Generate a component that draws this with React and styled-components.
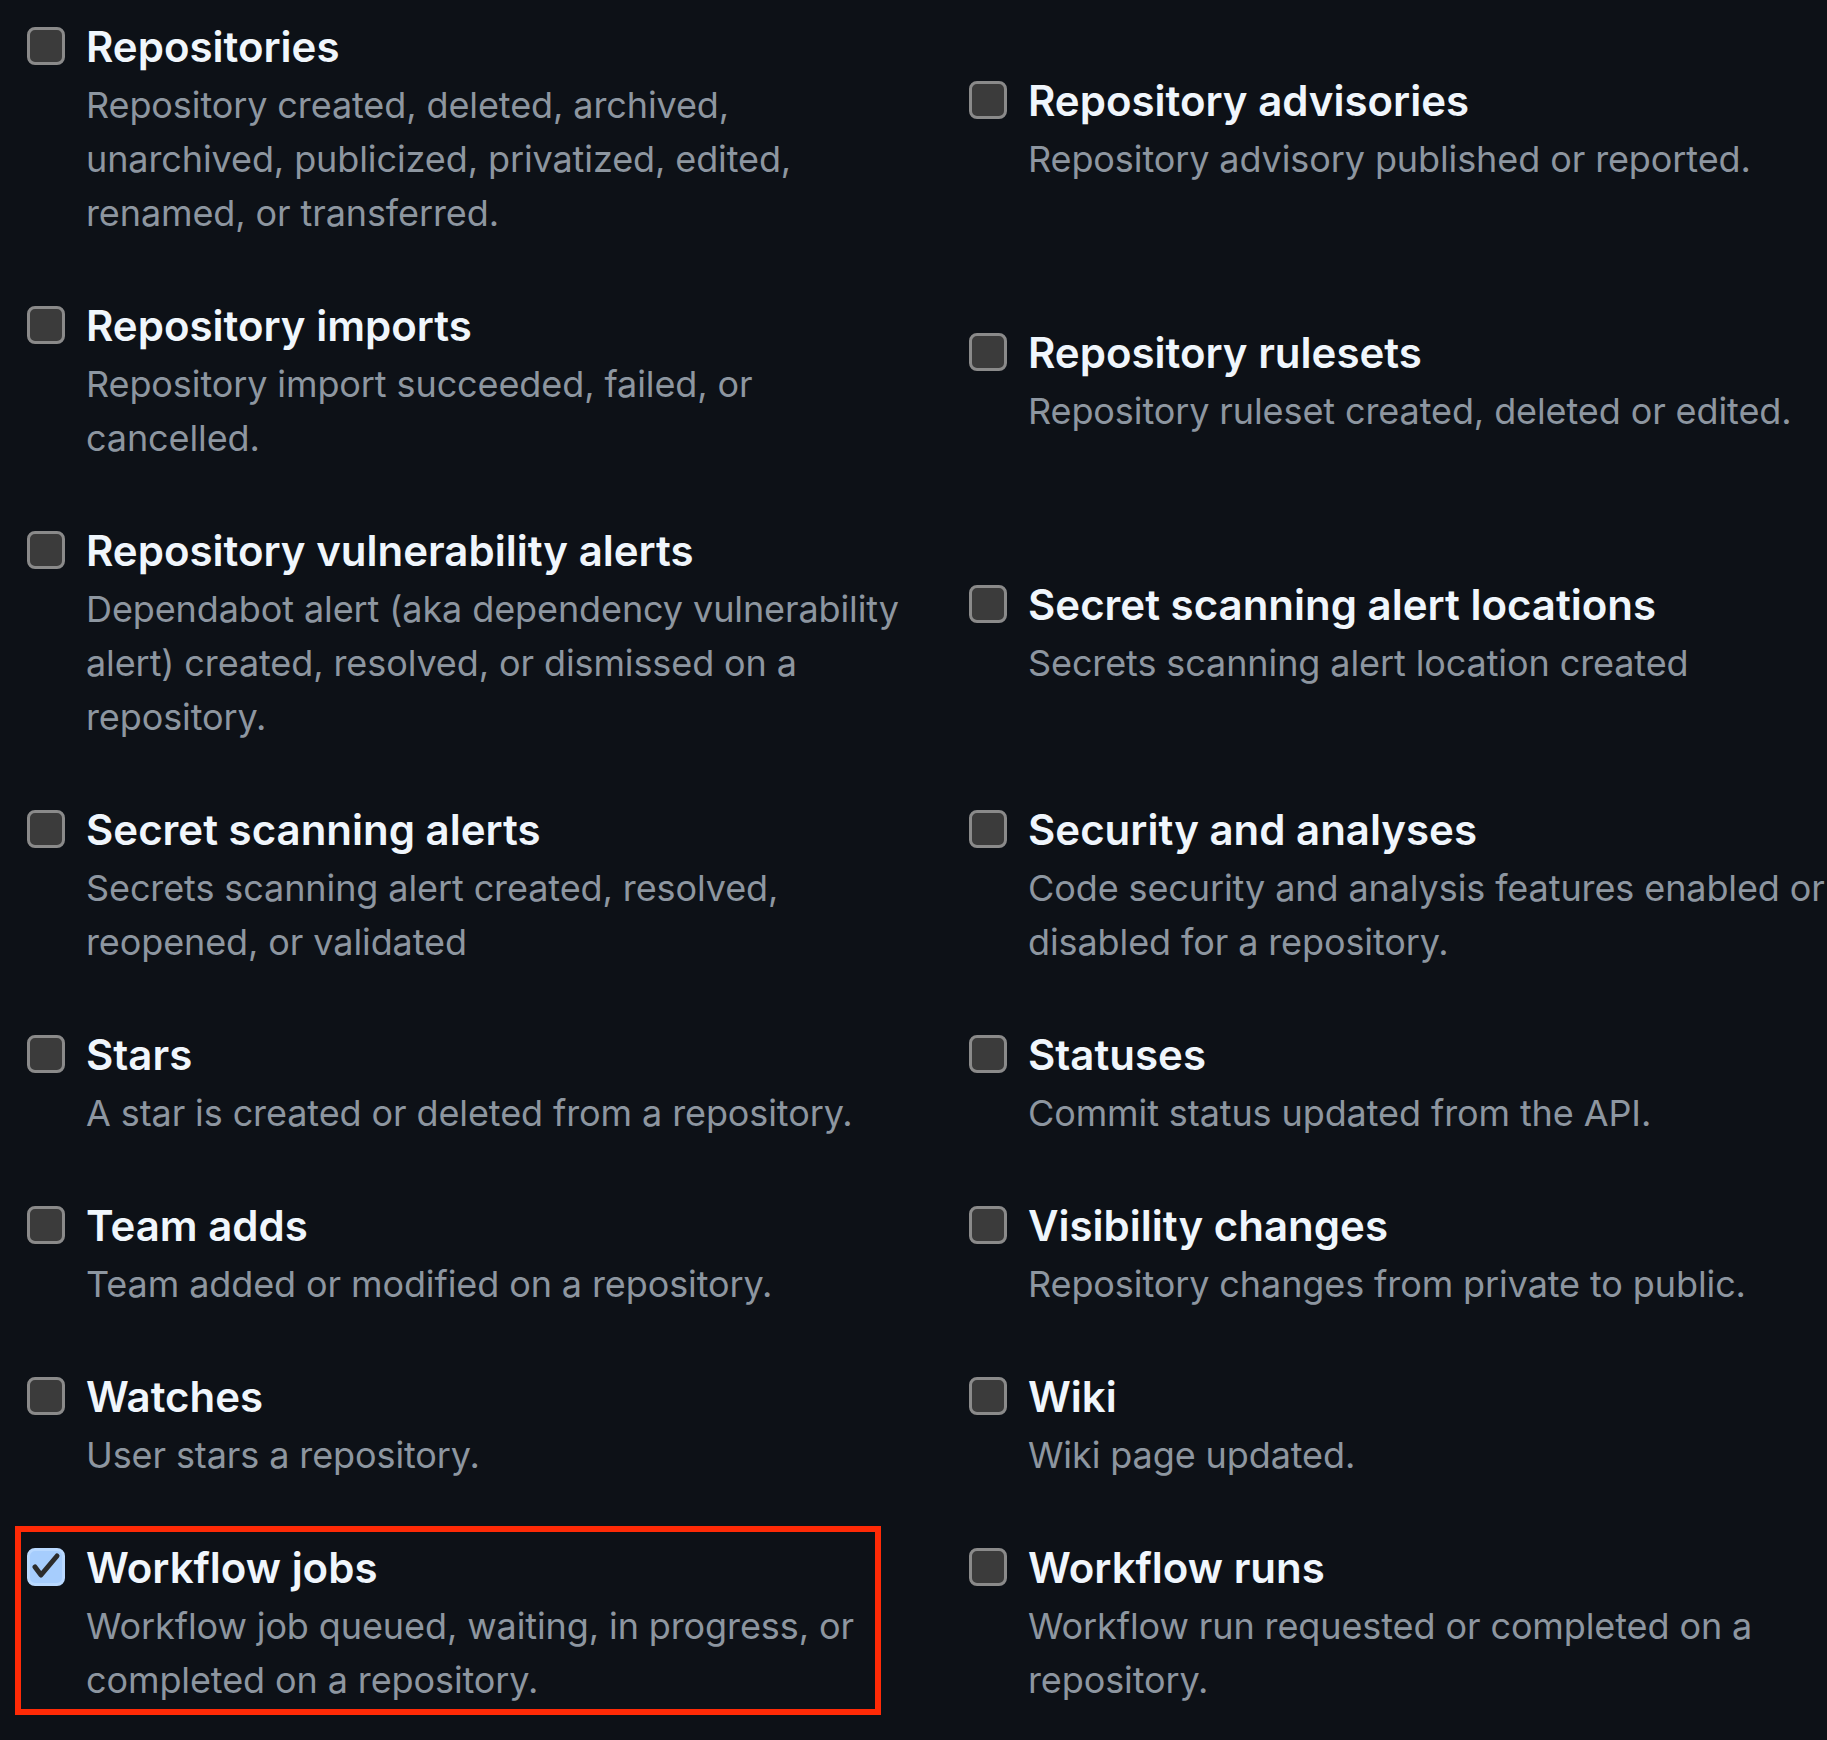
import React from "react";
import styled, { createGlobalStyle } from "styled-components";

const GlobalStyle = createGlobalStyle`
  html, body {
    margin: 0;
    background: #0d1117;
  }
  body {
    font-family: Inter, "Noto Sans", "Liberation Sans", sans-serif;
    -webkit-font-smoothing: antialiased;
  }
`;

const events = [
  { title: "Repositories", note: "Repository created, deleted, archived, unarchived, publicized, privatized, edited, renamed, or transferred." },
  { title: "Repository advisories", note: "Repository advisory published or reported." },
  { title: "Repository imports", note: "Repository import succeeded, failed, or cancelled." },
  { title: "Repository rulesets", note: "Repository ruleset created, deleted or edited." },
  { title: "Repository vulnerability alerts", note: "Dependabot alert (aka dependency vulnerability alert) created, resolved, or dismissed on a repository." },
  { title: "Secret scanning alert locations", note: "Secrets scanning alert location created" },
  { title: "Secret scanning alerts", note: "Secrets scanning alert created, resolved, reopened, or validated" },
  { title: "Security and analyses", note: "Code security and analysis features enabled or disabled for a repository." },
  { title: "Stars", note: "A star is created or deleted from a repository." },
  { title: "Statuses", note: "Commit status updated from the API." },
  { title: "Team adds", note: "Team added or modified on a repository." },
  { title: "Visibility changes", note: "Repository changes from private to public." },
  { title: "Watches", note: "User stars a repository." },
  { title: "Wiki", note: "Wiki page updated." },
  { title: "Workflow jobs", note: "Workflow job queued, waiting, in progress, or completed on a repository.", checked: true, highlight: true },
  { title: "Workflow runs", note: "Workflow run requested or completed on a repository." },
];

const Page = styled.div`
  padding: 15px 0 40px 27px;
`;

const EventGrid = styled.div`
  display: grid;
  grid-template-columns: 884px minmax(0, 1fr);
  column-gap: 58px;
  row-gap: 54px;
  align-items: center;
`;

const Item = styled.label`
  position: relative;
  display: grid;
  grid-template-columns: 38px minmax(0, 1fr);
  column-gap: 21px;
  align-items: start;

  ${(p) =>
    p.$highlight &&
    `
    &::after {
      content: "";
      position: absolute;
      left: -12px;
      top: -10px;
      width: 866px;
      height: 189px;
      box-sizing: border-box;
      border: 6px solid #ff2a06;
      pointer-events: none;
    }
  `}
`;

const Box = styled.span`
  box-sizing: border-box;
  width: 38px;
  height: 38px;
  margin-top: 12px;
  border-radius: 8px;
  border: 3px solid ${(p) => (p.$checked ? "#b9d9ff" : "#8a8a8a")};
  background: ${(p) => (p.$checked ? "#a6cdfd" : "#3b3b3b")};
  display: flex;
  align-items: center;
  justify-content: center;
`;

const Text = styled.span`
  display: flex;
  flex-direction: column;
`;

const Title = styled.span`
  font-size: 42px;
  line-height: 63px;
  font-weight: 600;
  color: #f0f6fc;
`;

const Note = styled.span`
  font-size: 36px;
  line-height: 54px;
  letter-spacing: -0.1px;
  color: #8d96a0;
`;

function Check() {
  return (
    <svg width="32" height="32" viewBox="0 0 32 32">
      <polyline
        points="5,16 11,24 27,5"
        fill="none"
        stroke="#2b2b2b"
        strokeWidth="5"
        strokeLinejoin="round"
        strokeLinecap="round"
      />
    </svg>
  );
}

function EventItem({ title, note, checked, highlight }) {
  return (
    <Item $highlight={highlight}>
      <Box $checked={checked}>{checked && <Check />}</Box>
      <Text>
        <Title>{title}</Title>
        <Note>{note}</Note>
      </Text>
    </Item>
  );
}

export default function App() {
  return (
    <>
      <GlobalStyle />
      <Page>
        <EventGrid>
          {events.map((e) => (
            <EventItem key={e.title} {...e} />
          ))}
        </EventGrid>
      </Page>
    </>
  );
}
